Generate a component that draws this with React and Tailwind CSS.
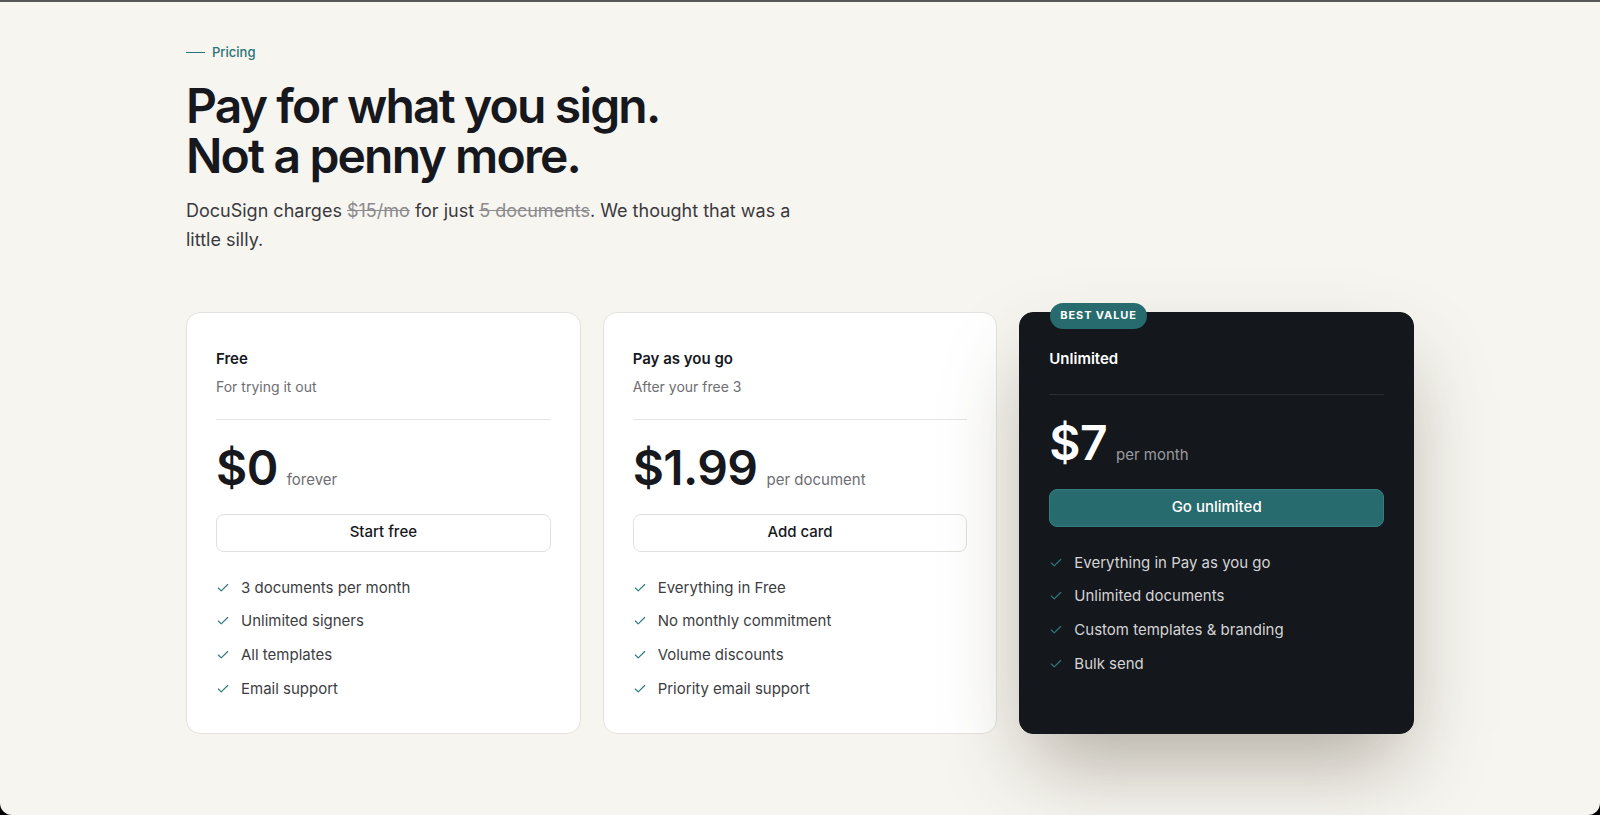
import React from 'react';

const plans = [
    {
        name: 'Free',
        sub: 'For trying it out',
        price: '$0',
        unit: 'forever',
        cta: 'Start free',
        features: ['3 documents per month', 'Unlimited signers', 'All templates', 'Email support'],
    },
    {
        name: 'Pay as you go',
        sub: 'After your free 3',
        price: '$1.99',
        unit: 'per document',
        cta: 'Add card',
        features: ['Everything in Free', 'No monthly commitment', 'Volume discounts', 'Priority email support'],
    },
    {
        name: 'Unlimited',
        price: '$7',
        unit: 'per month',
        cta: 'Go unlimited',
        dark: true,
        features: ['Everything in Pay as you go', 'Unlimited documents', 'Custom templates & branding', 'Bulk send'],
    },
];

function Check() {
    return (
        <svg width="14" height="14" viewBox="0 0 24 24" fill="none" stroke="#2f7a7c" strokeWidth="2" strokeLinecap="round" strokeLinejoin="round" className="shrink-0">
            <path d="M20 6 9 17l-5-5" />
        </svg>
    );
}

function PlanCard({ plan }) {
    const dark = plan.dark;
    return (
        <div
            className={
                dark
                    ? 'relative rounded-[14px] border border-[#14171c] bg-[#14171c] px-[29px] pt-[35px] pb-[32px] shadow-[0_40px_80px_-14px_rgba(70,60,40,0.4)]'
                    : 'relative rounded-[14px] border border-[#e4e2de] bg-white px-[29px] pt-[35px] pb-[32px]'
            }
        >
            {dark && (
                <span className="absolute -top-[10px] left-[30px] flex h-[26px] items-center rounded-full bg-[#276b6e] px-[10px] text-[11px] font-bold tracking-[0.08em] text-white">
                    BEST VALUE
                </span>
            )}

            {/* Plan header */}
            <div className={dark ? 'pb-[24px] border-b border-[#2a2e33]' : 'pb-[22px] border-b border-[#e6e4e1]'}>
                <h3 className={dark ? 'text-[15px] leading-[22px] font-semibold text-white' : 'text-[15px] leading-[22px] font-semibold text-[#16181d]'}>
                    {plan.name}
                </h3>
                {plan.sub && (
                    <p className="mt-[7px] text-[14px] leading-[20px] text-[#6e6e72]">{plan.sub}</p>
                )}
            </div>

            {/* Price */}
            <div className="mt-6 flex items-baseline gap-[9px]">
                <span className={dark ? 'text-[48px] leading-none font-semibold tracking-[-0.012em] text-white' : 'text-[48px] leading-none font-semibold tracking-[-0.012em] text-[#16181d]'}>
                    {plan.price}
                </span>
                <span className={dark ? 'text-[15px] text-[#9a9a9e]' : 'text-[15px] text-[#6e6e72]'}>{plan.unit}</span>
            </div>

            <button
                className={
                    dark
                        ? 'mt-[22px] h-[38px] w-full rounded-lg border border-[#347c7f] bg-[#276b6e] text-[15px] font-medium text-white'
                        : 'mt-[22px] h-[38px] w-full rounded-lg border border-[#e2e0dc] bg-white text-[15px] font-medium text-[#16181d]'
                }
            >
                {plan.cta}
            </button>

            {/* Features */}
            <ul className="mt-6 flex flex-col gap-[9.7px]">
                {plan.features.map((f) => (
                    <li key={f} className="flex items-center gap-[11px]">
                        <Check />
                        <span className={dark ? 'text-[15px] leading-[24px] text-[#d4d4d6]' : 'text-[15px] leading-[24px] text-[#3d3d41]'}>{f}</span>
                    </li>
                ))}
            </ul>
        </div>
    );
}

export default function App() {
    return (
        <div className="h-[815px] w-full bg-black" style={{ fontFamily: 'Inter, "Noto Sans", sans-serif' }}>
            <div className="h-full rounded-b-[12px] border-t-2 border-[#585858] bg-[#f7f5f0]">
                <div className="mx-auto max-w-[1228px] pt-[40px]">
                    {/* Eyebrow */}
                    <div className="flex items-center gap-[7px] text-[13px] leading-[20px] font-medium text-[#2a7377]">
                        <span className="h-px w-[19px] bg-[#2a7377]" />
                        Pricing
                    </div>

                    <h1 className="mt-[19px] text-[48px] leading-[50px] font-semibold tracking-[-0.038em] text-[#16181d]">
                        Pay for what you sign.
                        <br />
                        Not a penny more.
                    </h1>

                    <p className="mt-4 max-w-[625px] text-[18px] leading-[28.8px] text-[#3a3a3e]">
                        DocuSign charges <span className="text-[#8b8b8e] line-through">$15/mo</span> for just{' '}
                        <span className="text-[#8b8b8e] line-through">5 documents</span>. We thought that was a little silly.
                    </p>

                    {/* Plans */}
                    <div className="mt-[57px] grid grid-cols-3 gap-[22px]">
                        {plans.map((p) => (
                            <PlanCard key={p.name} plan={p} />
                        ))}
                    </div>
                </div>
            </div>
        </div>
    );
}
